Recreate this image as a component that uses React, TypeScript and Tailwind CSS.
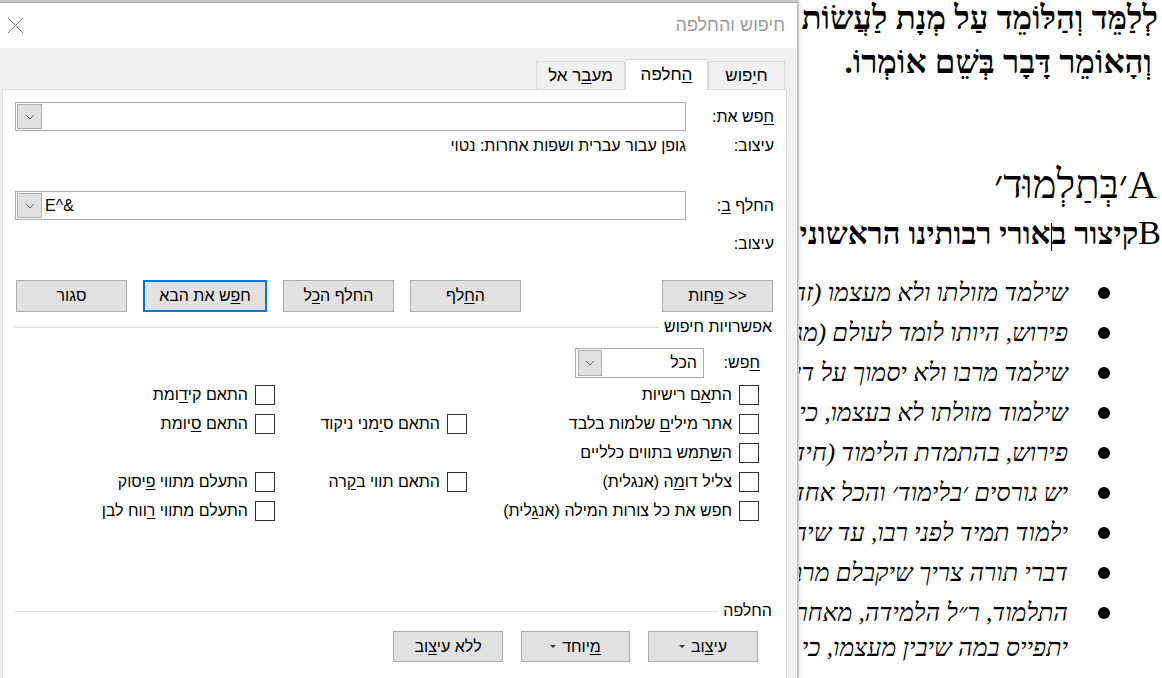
import type { ReactNode } from "react";

const ui = "font-['Liberation_Sans','DejaVu_Sans',sans-serif]";

function Chevron() {
  return (
    <svg width="10" height="6" viewBox="0 0 10 6" fill="none">
      <path d="M1 1l4 4 4-4" stroke="#606060" strokeWidth="1" />
    </svg>
  );
}

function DropBtn() {
  return (
    <span className="flex items-center justify-center w-[25px] h-[25px] m-[1px] bg-[#e1e1e1] border border-[#adadad] shrink-0">
      <Chevron />
    </span>
  );
}

function Combo({ value }: { value?: string }) {
  return (
    <div
      dir="ltr"
      className="flex-1 flex items-center h-[29px] ml-[12px] bg-white border border-[#acacac]"
    >
      <DropBtn />
      {value && <span className="pl-[2px] text-[16px] text-black">{value}</span>}
    </div>
  );
}

function Btn({
  children,
  primary,
  caret,
  w = "w-[111px]",
  h = "h-[32px]",
}: {
  children: ReactNode;
  primary?: boolean;
  caret?: boolean;
  w?: string;
  h?: string;
}) {
  return (
    <button
      type="button"
      className={`flex items-center justify-center gap-[6px] ${w} ${h} bg-[#e1e1e1] text-[16px] text-black ${
        primary ? "border-2 border-[#0078d7]" : "border border-[#adadad]"
      }`}
    >
      <span>{children}</span>
      {caret && (
        <span className="w-0 h-0 border-l-[3px] border-r-[3px] border-t-[3px] border-l-transparent border-r-transparent border-t-[#333]" />
      )}
    </button>
  );
}

function Check({ children, className = "" }: { children: ReactNode; className?: string }) {
  return (
    <label className={`flex items-center gap-[7px] h-[29px] ${className}`}>
      <span className="w-[20px] h-[20px] border border-[#333] bg-white shrink-0" />
      <span className="text-[16px] text-black">{children}</span>
    </label>
  );
}

function Section({ title }: { title: string }) {
  return (
    <div className="flex items-center h-[30px] pr-[14px] pl-[12px] gap-[5px]">
      <span className="text-[16px] text-black">{title}</span>
      <span className="flex-1 h-px bg-[#dcdcdc]" />
    </div>
  );
}

const bullets = [
  "שילמד מזולתו ולא מעצמו (זה לשון הרב המפרש בפירושו)",
  "פירוש, היותו לומד לעולם (מגן אבות)",
  "שילמד מרבו ולא יסמוך על דעתו לבדו",
  "שילמוד מזולתו לא בעצמו, כי אין התורה נקנית",
  "פירוש, בהתמדת הלימוד (חיד״א)",
  "יש גורסים ׳בלימוד׳ והכל אחד הוא",
  "ילמוד תמיד לפני רבו, עד שיהיה בקי",
  "דברי תורה צריך שיקבלם מרבו ולא מעצמו",
];

export default function App() {
  return (
    <div className="flex w-[1162px] h-[678px] overflow-hidden bg-white">
      {/* dialog */}
      <div
        dir="rtl"
        className={`${ui} flex flex-col w-[798px] shrink-0 h-full border-r border-[#bcbcbc] shadow-[2px_0_4px_rgba(0,0,0,0.12)] z-10`}
      >
        <div className="h-[3px] bg-[#c8c8c8] border-b border-[#a8a8a8]" />
        <div className="flex items-center justify-between h-[45px] bg-white pr-[12px] pl-[7px]">
          <span className="text-[18px] text-[#9a9a9a]">חיפוש והחלפה</span>
          <svg width="17" height="17" viewBox="0 0 17 17">
            <path d="M1 1l15 15M16 1L1 16" stroke="#7a7a7a" strokeWidth="1" />
          </svg>
        </div>

        <div className="flex-1 flex flex-col bg-[#f0f0f0] pt-[10px] pr-[10px] pl-[2px]">
          {/* tabs */}
          <div className="flex items-end h-[31px] pr-[2px]">
            <div className="flex items-center justify-center w-[77px] h-[28px] border border-b-0 border-[#d9d9d9] text-[17px]">
              <span>
                ח<u className="underline-offset-2">י</u>פוש
              </span>
            </div>
            <div className="relative flex items-center justify-center w-[83px] h-[31px] -mb-px bg-white border border-b-0 border-[#d9d9d9] text-[17px] z-10">
              <span>
                <u className="underline-offset-2">ה</u>חלפה
              </span>
            </div>
            <div className="flex items-center justify-center w-[89px] h-[28px] border border-b-0 border-[#d9d9d9] text-[17px]">
              <span>
                מע<u className="underline-offset-2">ב</u>ר אל
              </span>
            </div>
          </div>

          {/* panel */}
          <div className="flex-1 flex flex-col bg-white border border-b-0 border-[#d9d9d9] pt-[12px] text-black">
            <div className="flex items-center h-[29px]">
              <span className="w-[100px] pr-[12px] text-[16px]">
                <u className="underline-offset-2">ח</u>פש את:
              </span>
              <Combo />
            </div>
            <div className="flex items-center h-[30px] text-[16px]">
              <span className="w-[100px] pr-[12px]">עיצוב:</span>
              <span>גופן עבור עברית ושפות אחרות: נטוי</span>
            </div>

            <div className="flex items-center h-[29px] mt-[30px]">
              <span className="w-[100px] pr-[12px] text-[16px]">
                החלף <u className="underline-offset-2">ב</u>:
              </span>
              <Combo value="E^&" />
            </div>
            <div className="flex items-center h-[48px] text-[16px]">
              <span className="w-[100px] pr-[12px]">עיצוב:</span>
            </div>

            <div className="flex items-center justify-between mt-[12px] pr-[13px] pl-[13px]">
              <Btn>
                &lt;&lt; <u className="underline-offset-2">פ</u>חות
              </Btn>
              <div className="flex items-center gap-[16px]">
                <Btn>
                  ה<u className="underline-offset-2">ח</u>לף
                </Btn>
                <Btn>
                  החלף ה<u className="underline-offset-2">כ</u>ל
                </Btn>
                <Btn primary w="w-[124px]">
                  ח<u className="underline-offset-2">פ</u>ש את הבא
                </Btn>
                <Btn>סגור</Btn>
              </div>
            </div>

            <Section title="אפשרויות חיפוש" />

            <div className="flex items-center h-[30px] mt-[6px] pr-[26px]">
              <span className="w-[56px] text-[16px]">
                <u className="underline-offset-2">ח</u>פש:
              </span>
              <div
                dir="ltr"
                className="flex items-center justify-between w-[129px] h-[30px] bg-white border border-[#acacac]"
              >
                <span className="flex items-center justify-center w-[24px] h-[26px] m-[1px] ml-[2px] bg-[#e1e1e1] border border-[#adadad]">
                  <Chevron />
                </span>
                <span className="pr-[6px] text-[16px]">הכל</span>
              </div>
            </div>

            <div className="grid grid-cols-[292px_192px_1fr] grid-rows-[repeat(5,29px)] mt-[2px] pr-[27px]">
              <Check className="col-start-1 row-start-1">
                הת<u className="underline-offset-2">א</u>ם רישיות
              </Check>
              <Check className="col-start-3 row-start-1">
                התאם קי<u className="underline-offset-2">ד</u>ומת
              </Check>
              <Check className="col-start-1 row-start-2">
                אתר מילי<u className="underline-offset-2">ם</u> שלמות בלבד
              </Check>
              <Check className="col-start-2 row-start-2">
                התאם ס<u className="underline-offset-2">י</u>מני ניקוד
              </Check>
              <Check className="col-start-3 row-start-2">
                התאם <u className="underline-offset-2">ס</u>יומת
              </Check>
              <Check className="col-start-1 row-start-3">
                ה<u className="underline-offset-2">ש</u>תמש בתווים כלליים
              </Check>
              <Check className="col-start-1 row-start-4">
                צליל דו<u className="underline-offset-2">מ</u>ה (אנגלית)
              </Check>
              <Check className="col-start-2 row-start-4">
                התאם תווי ב<u className="underline-offset-2">ק</u>רה
              </Check>
              <Check className="col-start-3 row-start-4">
                התעלם מתווי <u className="underline-offset-2">פ</u>יסוק
              </Check>
              <Check className="col-start-1 row-start-5">
                חפש את כל צורות המילה (אנ<u className="underline-offset-2">ג</u>לית)
              </Check>
              <Check className="col-start-3 row-start-5">
                התעלם מתווי <u className="underline-offset-2">ר</u>ווח לבן
              </Check>
            </div>

            <div className="mt-[71px]">
              <Section title="החלפה" />
            </div>

            <div className="flex items-center gap-[18px] mt-[5px] pr-[28px]">
              <Btn caret w="w-[110px]" h="h-[31px]">
                עי<u className="underline-offset-2">צ</u>וב
              </Btn>
              <Btn caret w="w-[109px]" h="h-[31px]">
                <u className="underline-offset-2">מ</u>יוחד
              </Btn>
              <Btn w="w-[110px]" h="h-[31px]">
                ללא עי<u className="underline-offset-2">צ</u>וב
              </Btn>
            </div>
          </div>
        </div>
      </div>

      {/* document behind */}
      <div
        dir="rtl"
        className="flex-1 min-w-0 flex flex-col overflow-hidden whitespace-nowrap bg-white text-black font-['Liberation_Serif','DejaVu_Serif',serif] border-l border-[#e2e2e2]"
      >
        <div className="h-[36px] leading-[36px] pr-[4px] text-[33px] font-bold">
          לְלַמֵּד וְהַלּוֹמֵד עַל מְנָת לַעֲשׂוֹת וְהַמְּחַכִּים
        </div>
        <div className="h-[36px] leading-[36px] mt-[8px] pr-[10px] text-[33px] font-bold">
          וְהָאוֹמֵר דָּבָר בְּשֵׁם אוֹמְרוֹ.
        </div>
        <div className="h-[44px] leading-[44px] mt-[83px] pr-[5px] text-[40px]">
          A׳בְּתַלְמוּד׳
        </div>
        <div className="h-[40px] leading-[40px] mt-[6px] pr-[1px] text-[31px] font-bold">
          <span className="font-normal text-[34px]">B</span>קיצור ב
          <span className="inline-block w-px h-[28px] bg-black align-middle" />
          אורי רבותינו הראשונים
        </div>
        <ul className="mt-[20px] text-[25px] italic">
          {bullets.map((b) => (
            <li key={b} className="flex items-center h-[40px] pr-[52px]">
              <span className="w-[12px] h-[12px] rounded-full bg-black shrink-0" />
              <span className="mr-[30px]">{b}</span>
            </li>
          ))}
          <li className="flex pr-[52px]">
            <span className="w-[12px] h-[12px] rounded-full bg-black shrink-0 mt-[14px]" />
            <span className="mr-[30px] leading-[35px] pt-[2px]">
              התלמוד, ר״ל הלמידה, מאחר שאין אדם
              <br />
              יתפייס במה שיבין מעצמו, כי אם
            </span>
          </li>
        </ul>
      </div>
    </div>
  );
}
